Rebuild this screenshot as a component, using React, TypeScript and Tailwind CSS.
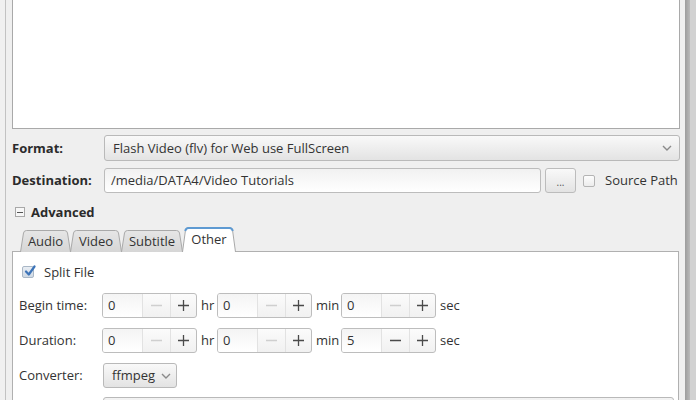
import React from "react";

const font = { fontFamily: '"Open Sans", "Noto Sans", "DejaVu Sans", sans-serif' };

function Chevron({ className = "" }: { className?: string }) {
  return (
    <svg width="10" height="6" viewBox="0 0 10 6" className={className}>
      <path d="M1 1 L5 5 L9 1" fill="none" stroke="#8a8a8a" strokeWidth="1.4" />
    </svg>
  );
}

function Spin({ value, minusOn }: { value: string; minusOn?: boolean }) {
  return (
    <div className="flex h-[25px] w-[95px] rounded-[3px] border border-[#bdbdbd] bg-gradient-to-b from-[#fbfbfb] to-[#f1f1f1] overflow-hidden">
      <div className="w-[39px] flex items-center pl-[5px] pt-[1px] text-[13px] text-[#333] bg-gradient-to-b from-[#f4f4f4] to-[#ffffff]">
        {value}
      </div>
      <div className="w-[28px] flex items-center justify-center border-l border-[#e2e2e2]">
        <svg width="11" height="11" viewBox="0 0 11 11">
          <path d="M0 5.5 H11" stroke={minusOn ? "#4a4a4a" : "#cfcfcf"} strokeWidth="1.3" />
        </svg>
      </div>
      <div className="w-[26px] flex items-center justify-center border-l border-[#e2e2e2]">
        <svg width="11" height="11" viewBox="0 0 11 11">
          <path d="M0 5.5 H11 M5.5 0 V11" stroke="#4a4a4a" strokeWidth="1.3" />
        </svg>
      </div>
    </div>
  );
}

function TimeRow({ label, vals, minusOn }: { label: string; vals: string[]; minusOn: boolean[] }) {
  return (
    <div className="flex items-center h-[25px]">
      <div className="w-[83px] pt-[1px] text-[13px] text-[#333]">{label}</div>
      <Spin value={vals[0]} minusOn={minusOn[0]} />
      <div className="w-[20px] pl-[4px] pt-[1px] text-[13px] text-[#333]">hr</div>
      <Spin value={vals[1]} minusOn={minusOn[1]} />
      <div className="w-[29px] pl-[4px] pt-[1px] text-[13px] text-[#333]">min</div>
      <Spin value={vals[2]} minusOn={minusOn[2]} />
      <div className="pl-[4px] pt-[1px] text-[13px] text-[#333]">sec</div>
    </div>
  );
}

function Tab({ label, width, active, ml }: { label: string; width: number; active?: boolean; ml: string }) {
  const h = active ? 25 : 22;
  const w = width;
  const d = `M0.5 ${h} L3.5 3 Q4 0.5 6.5 0.5 L${w - 6.5} 0.5 Q${w - 4} 0.5 ${w - 3.5} 3 L${w - 0.5} ${h}`;
  return (
    <div
      className={`relative flex items-center justify-center pt-[1px] text-[13px] text-[#333] ${ml} ${active ? "z-20 h-[25px]" : "z-10 h-[22px]"}`}
      style={{ width: w }}
    >
      <svg className="absolute inset-0" width={w} height={h} viewBox={`0 0 ${w} ${h}`}>
        <defs>
          <linearGradient id={`g${label}`} x1="0" y1="0" x2="0" y2="1">
            <stop offset="0" stopColor={active ? "#ffffff" : "#e6e6e6"} />
            <stop offset="1" stopColor={active ? "#ffffff" : "#d6d6d6"} />
          </linearGradient>
        </defs>
        <path d={d + ` L0.5 ${h} Z`} fill={`url(#g${label})`} />
        <path d={d} fill="none" stroke="#a9a9a9" strokeWidth="1" />
        {active && (
          <path d={`M3.2 4 Q4 1 6.5 1 L${w - 6.5} 1 Q${w - 4} 1 ${w - 3.2} 4`} fill="none" stroke="#5e9ad2" strokeWidth="2" />
        )}
      </svg>
      <span className="relative">{label}</span>
    </div>
  );
}

export default function App() {
  return (
    <div className="w-[696px] h-[400px] bg-[#efefef] overflow-hidden flex" style={font}>
      <div className="w-[5px] bg-[#f0f0f0]" />
      <div className="w-[1px] bg-[#c2c2c2]" />
      <div className="w-[679px] pl-[6px] pr-[5px] bg-[#efefef] flex flex-col">
        {/* list box */}
        <div className="h-[129px] w-[668px] bg-white border-x border-b border-[#a9a9a9] shrink-0" />

        {/* Format */}
        <div className="mt-[6px] h-[26px] flex items-center shrink-0">
          <div className="w-[92px] pt-[1px] text-[13px] font-bold text-[#2b2b2b]">Format:</div>
          <div className="flex-1 h-[26px] rounded-[3px] border border-[#b9b9b9] bg-gradient-to-b from-[#f9f9f9] to-[#e3e3e3] flex items-center pl-[8px] pr-[7px]">
            <span className="flex-1 pt-[1px] text-[13px] text-[#333]">Flash Video (flv) for Web use FullScreen</span>
            <Chevron />
          </div>
        </div>

        {/* Destination */}
        <div className="mt-[7px] h-[25px] flex items-center shrink-0">
          <div className="w-[92px] pt-[1px] text-[13px] font-bold text-[#2b2b2b]">Destination:</div>
          <div className="w-[437px] h-[25px] rounded-[3px] border border-[#bcbcbc] bg-gradient-to-b from-[#f1f1f1] to-[#ffffff] flex items-center pl-[6px] pt-[1px] text-[13px] text-[#333]">
            /media/DATA4/Video Tutorials
          </div>
          <div className="ml-[4px] w-[31px] h-[25px] rounded-[3px] border border-[#bcbcbc] bg-gradient-to-b from-[#f9f9f9] to-[#e3e3e3] flex items-end justify-center pb-[5px] text-[10px] leading-none text-[#555]">
            ...
          </div>
          <div className="ml-[7px] w-[12px] h-[12px] rounded-[2px] border border-[#b4b4b4] bg-gradient-to-b from-[#fdfdfd] to-[#ececec]" />
          <div className="ml-[10px] pt-[1px] text-[13px] text-[#333]">Source Path</div>
        </div>

        {/* Advanced */}
        <div className="mt-[10px] h-[18px] flex items-center pl-[3px] shrink-0">
          <div className="w-[10px] h-[10px] border border-[#a8a8a8] bg-[#f7f7f7] flex items-center justify-center">
            <div className="w-[6px] h-[1px] bg-[#555]" />
          </div>
          <div className="ml-[6px] pt-[1px] text-[13px] font-bold text-[#2b2b2b]">Advanced</div>
        </div>

        {/* Tabs */}
        <div className="mt-[6px] h-[25px] flex items-end pl-[8px] shrink-0 relative z-10">
          <Tab label="Audio" width={51} ml="" />
          <Tab label="Video" width={52} ml="ml-[-1px]" />
          <Tab label="Subtitle" width={62} ml="ml-[-1px]" />
          <Tab label="Other" width={54} active ml="ml-[-1px]" />
        </div>

        {/* Pane */}
        <div className="mt-[-1px] w-[667px] flex-1 bg-white border border-[#b0b0b0] pl-[6px] pt-[10px] flex flex-col">
          <div className="h-[20px] flex items-center ml-[3px]">
            <div className="relative w-[12px] h-[12px] rounded-[2px] border border-[#a9b7c6] bg-gradient-to-b from-[#e9eef4] to-[#cfd9e4]">
              <svg className="absolute left-[1px] top-[-2px]" width="12" height="12" viewBox="0 0 12 12">
                <path d="M2 6.5 L4.8 9.5 L10.5 1.5" fill="none" stroke="#3d74b8" strokeWidth="2.2" strokeLinecap="round" strokeLinejoin="round" />
              </svg>
            </div>
            <div className="ml-[10px] pt-[1px] text-[13px] text-[#333]">Split File</div>
          </div>

          <div className="mt-[11px]">
            <TimeRow label="Begin time:" vals={["0", "0", "0"]} minusOn={[false, false, false]} />
          </div>
          <div className="mt-[10px]">
            <TimeRow label="Duration:" vals={["0", "0", "5"]} minusOn={[false, false, true]} />
          </div>

          <div className="mt-[10px] h-[25px] flex items-center">
            <div className="w-[84px] pt-[1px] text-[13px] text-[#333]">Converter:</div>
            <div className="w-[74px] h-[25px] rounded-[3px] border border-[#b9b9b9] bg-gradient-to-b from-[#f9f9f9] to-[#e3e3e3] flex items-center pl-[8px] gap-[6px]">
              <span className="pt-[1px] text-[13px] text-[#333]">ffmpeg</span>
              <Chevron />
            </div>
          </div>

          <div className="mt-[9px] ml-[84px] w-[571px] h-[20px] rounded-t-[3px] border border-[#b9b9b9] bg-gradient-to-b from-[#f3f3f3] to-[#e3e3e3]" />
        </div>
      </div>
      <div className="w-[5px] bg-gradient-to-r from-[#9c9c9c] to-[#b9b9b9]" />
      <div className="w-[6px] bg-[#d2d2d2]" />
    </div>
  );
}
